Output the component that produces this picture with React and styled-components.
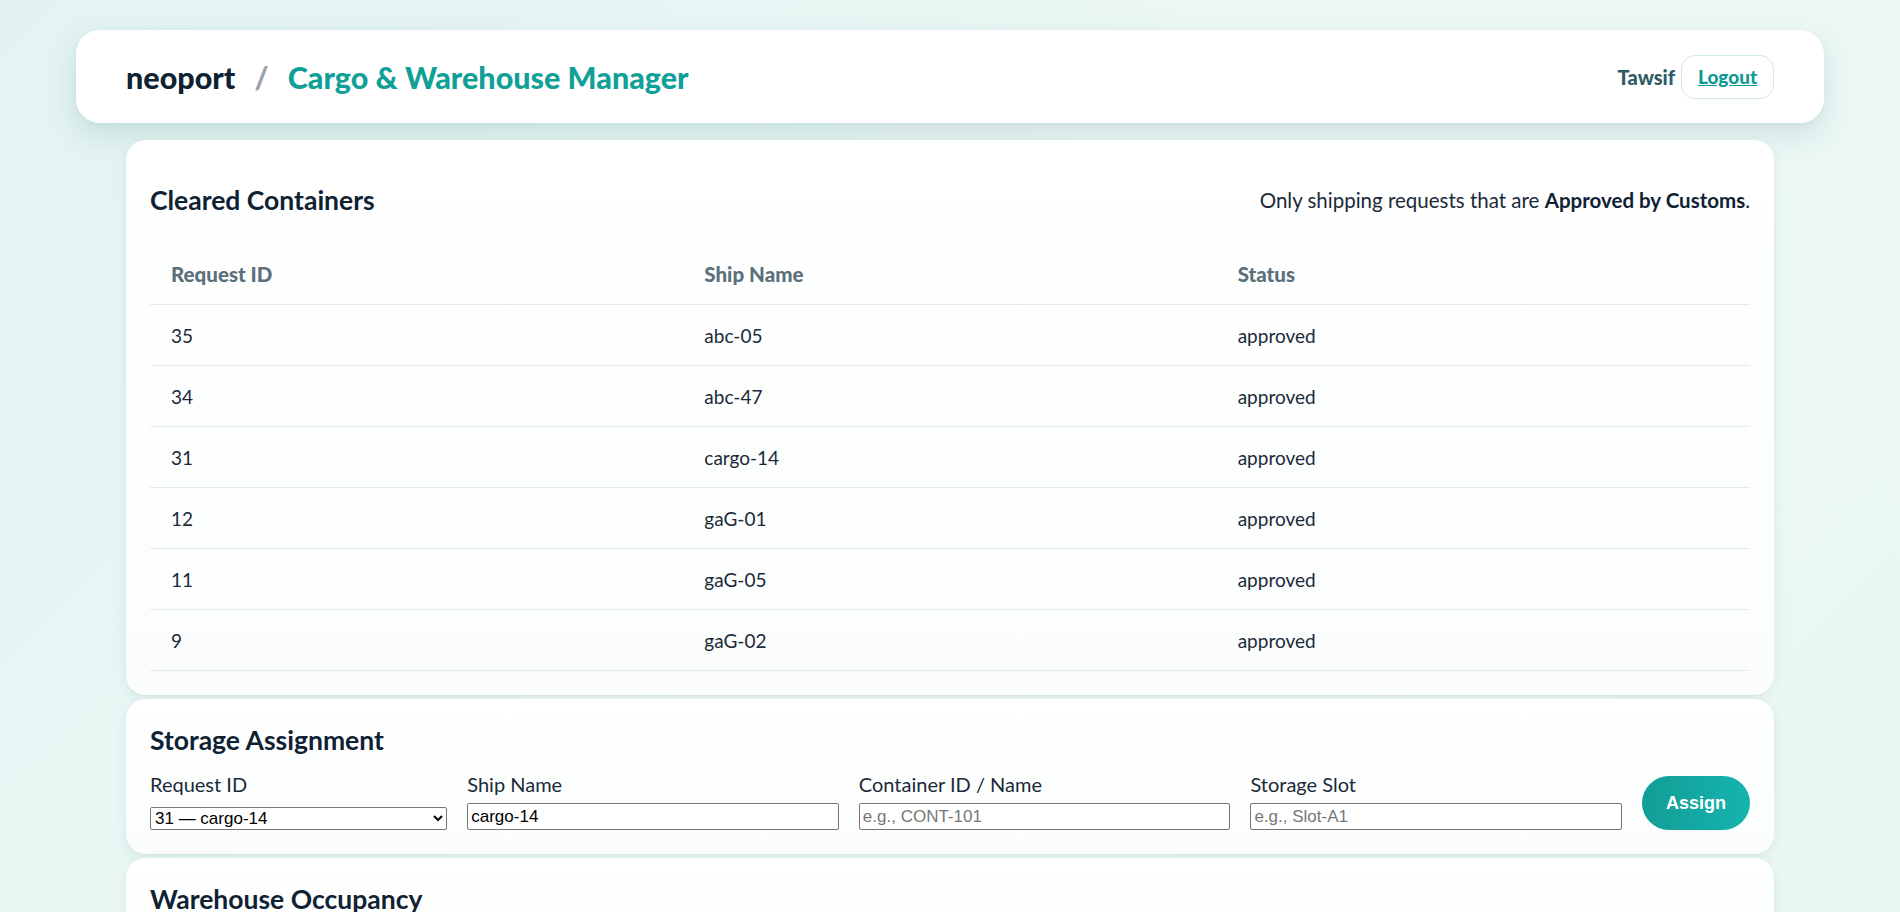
import styled, { createGlobalStyle } from "styled-components";

const GlobalStyle = createGlobalStyle`
  html, body {
    margin: 0;
    padding: 0;
  }
  body {
    min-height: 912px;
    background: linear-gradient(135deg, #e2f3f1 0%, #ecf8f6 50%, #e9f7f4 100%);
    font-family: Lato, "Noto Sans", sans-serif;
    color: #0f2233;
  }
`;

const rows = [
  { id: 35, ship: "abc-05", status: "approved" },
  { id: 34, ship: "abc-47", status: "approved" },
  { id: 31, ship: "cargo-14", status: "approved" },
  { id: 12, ship: "gaG-01", status: "approved" },
  { id: 11, ship: "gaG-05", status: "approved" },
  { id: 9, ship: "gaG-02", status: "approved" },
];

export default function App() {
  return (
    <>
      <GlobalStyle />
      <Page>
        <TopBar>
          <Brand>
            neoport<Slash>/</Slash>
            <AppName>Cargo &amp; Warehouse Manager</AppName>
          </Brand>
          <UserBox>
            <UserName>Tawsif</UserName>
            <LogoutButton>Logout</LogoutButton>
          </UserBox>
        </TopBar>

        <Main>
          <Card>
            <CardHead>
              <CardTitle>Cleared Containers</CardTitle>
              <Note>
                Only shipping requests that are <b>Approved by Customs</b>.
              </Note>
            </CardHead>
            <Table>
              <thead>
                <tr>
                  <Th>Request ID</Th>
                  <Th>Ship Name</Th>
                  <Th>Status</Th>
                </tr>
              </thead>
              <tbody>
                {rows.map((row) => (
                  <tr key={row.id}>
                    <Td>{row.id}</Td>
                    <Td>{row.ship}</Td>
                    <Td>{row.status}</Td>
                  </tr>
                ))}
              </tbody>
            </Table>
          </Card>

          <Card>
            <CardTitle>Storage Assignment</CardTitle>
            <FormGrid>
              <Field>
                <Label>Request ID</Label>
                <Select defaultValue="31">
                  {rows.map((row) => (
                    <option key={row.id} value={String(row.id)}>
                      {row.id} — {row.ship}
                    </option>
                  ))}
                </Select>
              </Field>
              <Field>
                <Label>Ship Name</Label>
                <Input defaultValue="cargo-14" />
              </Field>
              <Field>
                <Label>Container ID / Name</Label>
                <Input placeholder="e.g., CONT-101" />
              </Field>
              <Field>
                <Label>Storage Slot</Label>
                <Input placeholder="e.g., Slot-A1" />
              </Field>
              <AssignButton>Assign</AssignButton>
            </FormGrid>
          </Card>

          <Card>
            <CardTitle>Warehouse Occupancy</CardTitle>
            <Spacer />
          </Card>
        </Main>
      </Page>
    </>
  );
}

const Page = styled.div`
  padding: 30px 76px 0;
`;

const TopBar = styled.header`
  height: 93px;
  box-sizing: border-box;
  padding: 0 50px;
  display: flex;
  align-items: center;
  justify-content: space-between;
  background: #fff;
  border-radius: 24px;
  box-shadow: 0 12px 30px rgba(20, 90, 90, 0.13), 0 2px 6px rgba(20, 90, 90, 0.05);
`;

const Brand = styled.div`
  font-family: Lato, sans-serif;
  font-size: 30.5px;
  font-weight: 900;
  color: #0f2233;
  display: flex;
  align-items: center;
`;

const Slash = styled.span`
  color: #9aa3ab;
  margin: 0 19px;
`;

const AppName = styled.span`
  color: #11a098;
`;

const UserBox = styled.div`
  display: flex;
  align-items: center;
  gap: 6px;
`;

const UserName = styled.span`
  font-size: 20px;
  font-weight: 900;
  color: #2e5c66;
`;

const LogoutButton = styled.button`
  width: 93px;
  height: 44px;
  border: 1px solid #cfe7e7;
  border-radius: 14px;
  background: #fff;
  color: #0f9a92;
  font-family: Lato, sans-serif;
  font-size: 19px;
  font-weight: 900;
  text-decoration: underline;
  cursor: pointer;
`;

const Main = styled.main`
  padding: 17px 50px 0;
  display: flex;
  flex-direction: column;
  gap: 4px;
`;

const Card = styled.section`
  background: linear-gradient(180deg, #ffffff 0%, #fbfdfd 100%);
  border-radius: 20px;
  padding: 24px;
  box-shadow: 0 4px 14px rgba(20, 80, 80, 0.07), 0 1px 2px rgba(20, 80, 80, 0.05);
`;

const CardHead = styled.div`
  height: 80px;
  box-sizing: border-box;
  padding-bottom: 8px;
  display: flex;
  align-items: center;
  justify-content: space-between;
`;

const CardTitle = styled.h2`
  margin: 0;
  font-size: 26.5px;
  line-height: 34px;
  font-weight: 700;
  color: #0f2233;
`;

const Note = styled.p`
  margin: 0;
  font-size: 20.5px;
  color: #1a2a38;

  b {
    font-weight: 700;
    color: #0f2233;
  }
`;

const Table = styled.table`
  width: 100%;
  border-collapse: collapse;
  table-layout: fixed;
`;

const Th = styled.th`
  height: 60px;
  padding: 0 21px;
  text-align: left;
  font-size: 20.5px;
  font-weight: 900;
  color: #5b707b;
  border-bottom: 1px solid #e4ebeb;
`;

const Td = styled.td`
  height: 60px;
  padding: 0 21px;
  font-size: 19px;
  color: #1a2a38;
  border-bottom: 1px solid #e4ebeb;
`;

const FormGrid = styled.div`
  margin-top: 15px;
  display: grid;
  grid-template-columns: 0.8fr 1fr 1fr 1fr auto;
  gap: 20px;
  align-items: stretch;
`;

const Field = styled.div`
  display: flex;
  flex-direction: column;
  justify-content: space-between;
  min-width: 0;
`;

const Label = styled.label`
  font-size: 20px;
  line-height: 24px;
  color: #1a2a38;
  margin-bottom: 7px;
`;

const Select = styled.select`
  height: 23px;
  width: 100%;
  font-family: "Liberation Sans", Arial, sans-serif;
  font-size: 17px;
  color: #000;
  border: 1px solid #767676;
  border-radius: 2px;
  background: #fff;
`;

const Input = styled.input`
  height: 27px;
  width: 100%;
  box-sizing: border-box;
  padding: 1px 3px;
  font-family: "Liberation Sans", Arial, sans-serif;
  font-size: 17px;
  color: #000;
  border: 1px solid #767676;
  border-radius: 2px;

  &::placeholder {
    color: #777;
  }
`;

const AssignButton = styled.button`
  align-self: end;
  width: 108px;
  height: 54px;
  border: none;
  border-radius: 27px;
  background: linear-gradient(90deg, #129d97 0%, #16b4ae 100%);
  color: #fff;
  font-family: "Liberation Sans", Arial, sans-serif;
  font-size: 18px;
  font-weight: 700;
  cursor: pointer;
`;

const Spacer = styled.div`
  height: 60px;
`;
